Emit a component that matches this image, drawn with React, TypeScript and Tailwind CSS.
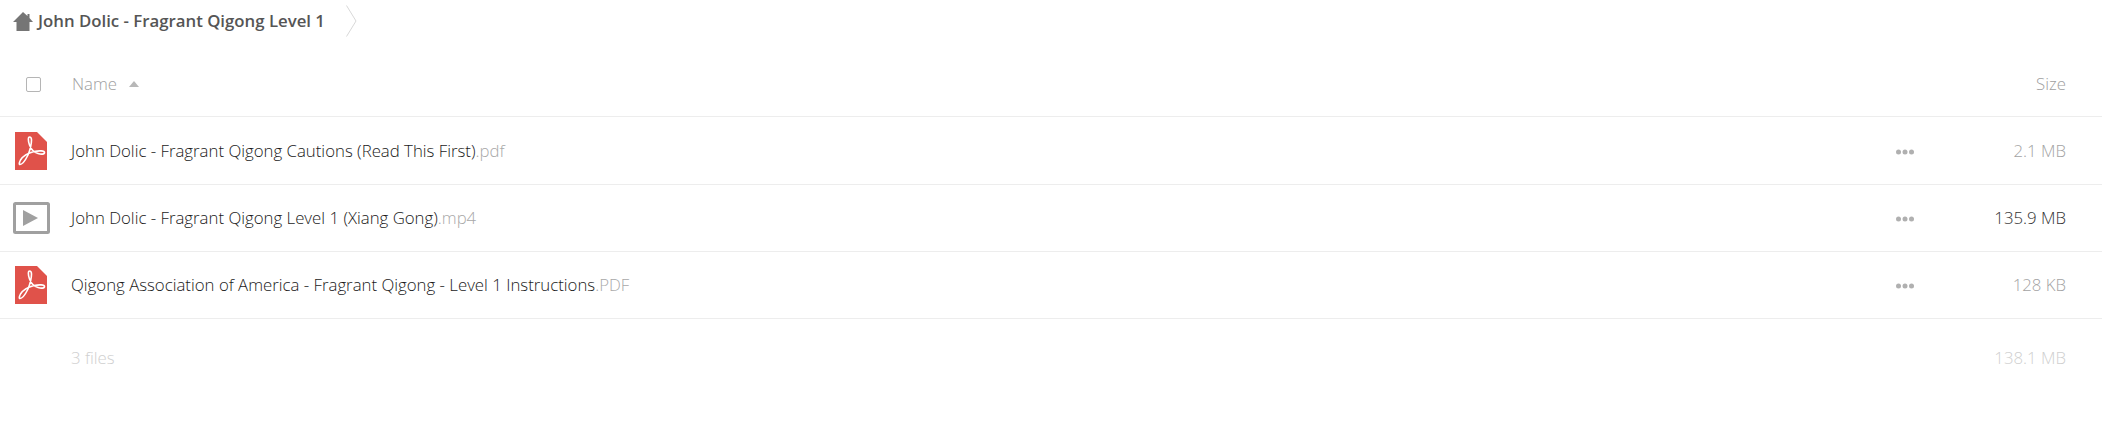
const files = [
  { name: "John Dolic - Fragrant Qigong Cautions (Read This First)", ext: ".pdf", size: "2.1 MB", color: "text-[#a3a3a3]", type: "pdf", height: "h-[68px]" },
  { name: "John Dolic - Fragrant Qigong Level 1 (Xiang Gong)", ext: ".mp4", size: "135.9 MB", color: "text-[#333333]", type: "video", height: "h-[67px]" },
  { name: "Qigong Association of America - Fragrant Qigong - Level 1 Instructions", ext: ".PDF", size: "128 KB", color: "text-[#a3a3a3]", type: "pdf", height: "h-[67px]" },
];

function PdfIcon() {
  return (
    <svg width="32" height="38" viewBox="0 0 32 38" className="ml-[15px]">
      <path d="M0 0H22L32 10V38H0Z" fill="#e0524a" />
      <path
        d="M14.500 5C13 5 13 9 14.500 13C16 17 19 20.500 23 21.500C26 22.500 29.500 22.500 29.500 20.500C29.500 18.500 24 18.500 19 19.500C13 21 8 24 5.500 28C4 31 4 32.500 5 32.500C7 32.500 10 29 13 23C15 18 16.500 12 16.500 8C16.500 6 16 5 14.500 5Z"
        fill="none"
        stroke="#fff"
        strokeWidth="1.600"
        strokeLinejoin="round"
      />
    </svg>
  );
}

function VideoIcon() {
  return (
    <svg width="37" height="32" viewBox="0 0 37 32" className="ml-[13px]">
      <rect x="1.500" y="1.500" width="34" height="29" fill="none" stroke="#a0a0a0" strokeWidth="3" rx="1" />
      <path d="M10 8L25 16L10 24Z" fill="#a0a0a0" />
    </svg>
  );
}

function FileRow({ file }: { file: (typeof files)[number] }) {
  return (
    <div className={`flex items-center border-b border-[#ededed] ${file.height}`}>
      <div className="flex w-[71px] shrink-0">
        {file.type === "pdf" ? <PdfIcon /> : <VideoIcon />}
      </div>
      <div className="flex-1 text-[16.8px] font-light text-[#1a1a1a]">
        {file.name}
        <span className="text-[#a8a8a8]">{file.ext}</span>
      </div>
      <svg width="18" height="6" viewBox="0 0 18 6" className="mr-[72px] mt-[2px]">
        <circle cx="2.500" cy="3" r="2.500" fill="#b0b0b0" />
        <circle cx="9" cy="3" r="2.500" fill="#b0b0b0" />
        <circle cx="15.500" cy="3" r="2.500" fill="#b0b0b0" />
      </svg>
      <div className={`w-[80px] text-right text-[16.8px] font-light ${file.color}`}>{file.size}</div>
      <div className="w-[36px]" />
    </div>
  );
}

export default function App() {
  return (
    <div className="h-[438px] w-full bg-white font-['Open_Sans',sans-serif]">
      <div className="flex h-[42px] items-center">
        <svg width="20" height="19" viewBox="0 0 20 19" className="ml-[13px]">
          <path d="M10 0L14.500 4V2H16.500V6L20 10H16.500V19H3.500V10H0Z" fill="#757575" />
        </svg>
        <span className="ml-[5px] text-[16.8px] font-semibold text-[#555555]">John Dolic - Fragrant Qigong Level 1</span>
        <svg width="11" height="32" viewBox="0 0 11 32" className="ml-[21px]">
          <path d="M0.500 0.500L10 16L0.500 31.500" fill="none" stroke="#d8d8d8" />
        </svg>
      </div>
      <div className="flex h-[75px] items-center border-b border-[#ededed] pt-[10px] text-[16.8px] font-light text-[#a0a0a0]">
        <div className="ml-[26px] h-[15px] w-[15px] rounded-[2px] border border-[#b5b5b5]" />
        <span className="ml-[31px]">Name</span>
        <svg width="10" height="6" viewBox="0 0 10 6" className="ml-[12px]">
          <path d="M5 0L10 6H0Z" fill="#b8b8b8" />
        </svg>
        <span className="ml-auto mr-[36px]">Size</span>
      </div>
      {files.map((file) => (
        <FileRow key={file.name} file={file} />
      ))}
      <div className="flex h-[78px] items-center text-[16.8px] font-light text-[#cfcfcf]">
        <span className="ml-[71px]">3 files</span>
        <span className="ml-auto mr-[36px]">138.1 MB</span>
      </div>
    </div>
  );
}
